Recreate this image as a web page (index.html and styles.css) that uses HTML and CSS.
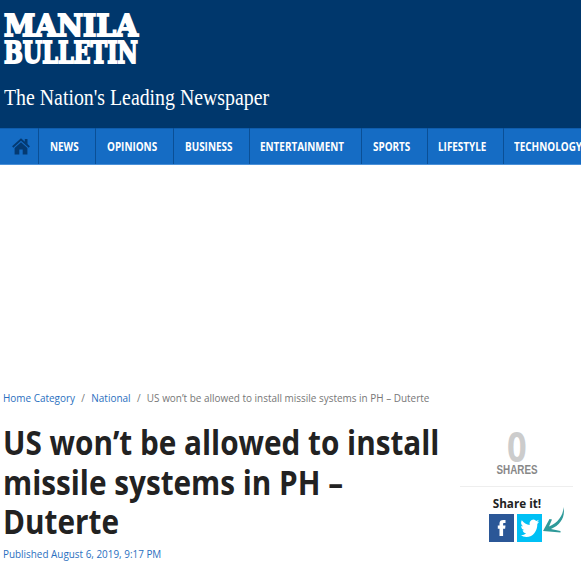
FILE: index.html
```
<!DOCTYPE html>
<html lang="en">
<head>
  <meta charset="utf-8">
  <title>US won’t be allowed to install missile systems in PH – Duterte</title>
  <link rel="stylesheet" href="styles.css">
</head>
<body>

<header class="masthead">
  <svg class="logo" width="144" height="60" viewBox="0 0 144 60" role="img" aria-label="Manila Bulletin">
    <text x="4" y="26" textLength="134" lengthAdjust="spacingAndGlyphs">MANILA</text>
    <text x="4" y="53" textLength="134" lengthAdjust="spacingAndGlyphs">BULLETIN</text>
  </svg>
  <p class="tagline"><span class="fit">The Nation's Leading Newspaper</span></p>
</header>

<nav class="menu">
  <a class="home" href="#" aria-label="Home">
    <svg width="18" height="17" viewBox="0 0 18 17">
      <path d="M.7 9 9 1.500 17.300 9" fill="none" stroke="#043a72" stroke-width="1.800"/>
      <path d="M12.800 1h2.700v5.500L12.800 4.200zM2.600 9.900 9 4.200l6.400 5.700V16.500h-4.700v-5H7.300v5H2.600z" fill="#043a72"/>
    </svg>
  </a>
  <a class="news" href="#"><span class="fit">NEWS</span></a>
  <a class="opinions" href="#"><span class="fit">OPINIONS</span></a>
  <a class="business" href="#"><span class="fit">BUSINESS</span></a>
  <a class="entertainment" href="#"><span class="fit">ENTERTAINMENT</span></a>
  <a class="sports" href="#"><span class="fit">SPORTS</span></a>
  <a class="lifestyle" href="#"><span class="fit">LIFESTYLE</span></a>
  <a class="technology" href="#"><span class="fit">TECHNOLOGY</span></a>
</nav>

<main class="page">
  <div class="breadcrumb"><span class="fit"><a href="#">Home Category</a><i>/</i><a href="#">National</a><i>/</i>US won’t be allowed to install missile systems in PH – Duterte</span></div>
  <div class="columns">
    <article class="story">
      <h1><span class="fit">US won’t be allowed to install<br>missile systems in PH –<br>Duterte</span></h1>
      <p class="published"><span class="fit">Published August 6, 2019, 9:17 PM</span></p>
    </article>
    <aside class="share">
      <div class="count"><span class="fit">0</span></div>
      <div class="label"><span class="fit">SHARES</span></div>
      <div class="title"><span class="fit">Share it!</span></div>
      <div class="buttons">
        <svg width="25" height="28" viewBox="0 0 25 28">
          <rect width="25" height="28" fill="#2b5797"/>
          <path d="M10.500 22v-7.200H8.800v-3.200h1.700V9.500C10.500 7 11.800 6 14.300 6h2.200v3h-1.400c-.8 0-1 .4-1 1.100v1.500h2.400l-.4 3.200h-2V22z" fill="#fff"/>
        </svg>
        <svg width="25" height="28" viewBox="0 0 25 28">
          <rect width="25" height="28" fill="#00c0f5"/>
          <path transform="translate(3.500 3.500) scale(.78 .9)" d="M23.950 4.570a10 10 0 0 1-2.820.770 4.960 4.960 0 0 0 2.160-2.720c-.950.550-2 .950-3.130 1.180a4.920 4.920 0 0 0-8.380 4.480C7.690 8.100 4.070 6.130 1.640 3.160a4.920 4.920 0 0 0 1.520 6.570 4.900 4.900 0 0 1-2.230-.610v.060a4.920 4.920 0 0 0 3.950 4.830 5 5 0 0 1-2.210.080 4.940 4.940 0 0 0 4.600 3.420A9.870 9.870 0 0 1 0 19.540a14 14 0 0 0 7.550 2.210c9.050 0 14-7.500 14-13.980l-.020-.630a9.900 9.900 0 0 0 2.420-2.570z" fill="#fff"/>
        </svg>
        <svg class="arrow" width="24" height="28" viewBox="0 0 24 28">
          <path d="M20.500 1C20.500 9 15 17 6 20.500L9 13.500 6.500 13 0 25 17.500 26.500v-1.500L8 23C17.500 19 22.500 11 20.500 1z" fill="#2f9a9a"/>
        </svg>
      </div>
    </aside>
  </div>
</main>

</body>
</html>
```
FILE: styles.css
```
html, body {
  margin: 0;
  padding: 0;
  background: #fff;
}
body {
  overflow: hidden;
  font-family: "Open Sans", "Noto Sans", sans-serif;
}
a { color: #2a6fc0; text-decoration: none; }
p, h1 { margin: 0; }

/* condensed text */
.fit {
  display: inline-block;
  white-space: nowrap;
  transform: scaleX(.9);
  transform-origin: 0 50%;
}

.masthead {
  height: 118px;
  padding-top: 10px;
  background: #00376c;
  color: #fff;
}
.logo { display: block; }
.logo text {
  font: bold 30px "DejaVu Serif", serif;
  fill: #fff;
  stroke: #fff;
  stroke-width: 2;
}
.tagline {
  margin: 14px 0 0 3.5px;
  font: 23px/28px "Liberation Serif", serif;
}
.tagline .fit { transform: scaleX(.862); }

.menu {
  display: flex;
  height: 37px;
  overflow: hidden;
  background: #156cc4;
  border-bottom: 1px solid #4a90d8;
  box-sizing: border-box;
  box-shadow: inset 0 1px #0f5dae;
}
.menu a {
  box-sizing: border-box;
  flex: none;
  padding-left: 11px;
  border-right: 1px solid #0a4f96;
  color: #fff;
  font-size: 12px;
  font-weight: bold;
  line-height: 37px;
}
.menu .fit { transform: scaleX(.826); }
.menu .home { display: flex; align-items: center; width: 39px; padding-left: 12px; }
.menu .news { width: 57px; }
.menu .opinions { width: 78px; }
.menu .business { width: 76px; }
.menu .entertainment { width: 112px; padding-left: 10px; }
.menu .sports { width: 66px; }
.menu .lifestyle { width: 76px; padding-left: 10px; }
.menu .technology { flex: 1; min-width: 0; padding-left: 10px; border-right: 0; }

.page { padding: 225px 0 0 3.4px; }
.breadcrumb {
  height: 16px;
  color: #777;
  font-size: 11px;
  line-height: 16px;
}
.breadcrumb .fit { transform: scaleX(.904); }
.breadcrumb i { margin: 0 7px; font-style: normal; }

.columns { display: flex; }
.story { width: 456.6px; padding-top: 17px; }
.story h1 {
  color: #222;
  font-size: 34px;
  font-weight: bold;
  line-height: 39.5px;
}
.story h1 .fit { transform: scaleX(.874); }
.published {
  margin-top: 4px;
  color: #2a6fc0;
  font-size: 11px;
  line-height: 16px;
}

.share { width: 113px; padding-top: 20px; text-align: center; }
.share .fit { transform-origin: 50% 50%; }
.count {
  height: 37px;
  color: #ccc;
  font: bold 41px/40px "Open Sans", sans-serif;
}
.count .fit { transform: scaleX(.84); }
.label {
  height: 23px;
  padding-left: 2px;
  border-bottom: 1px solid #eee;
  color: #888;
  font: bold 12px/15px "Liberation Sans", sans-serif;
}
.label .fit { transform: scaleX(.82); }
.title {
  padding-top: 7px;
  color: #222;
  font-size: 13px;
  font-weight: bold;
  line-height: 18px;
}
.buttons { display: flex; gap: 3px; margin: 2px 0 0 29px; }
.arrow { margin-left: -2px; margin-top: -8px; }
```
